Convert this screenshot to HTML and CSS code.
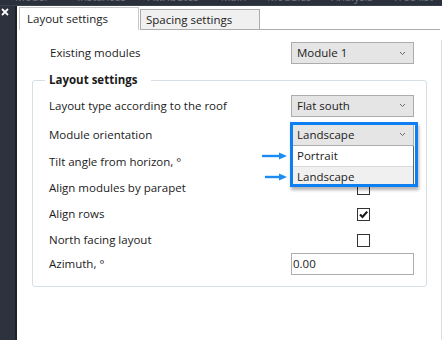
FILE: index.html
```html
<!DOCTYPE html>
<html>
<head>
<meta charset="utf-8">
<link rel="stylesheet" href="styles.css">
</head>
<body>
<div class="menubar">
  <span class="m1">Model</span><span class="m2">Instances</span><span class="m3">Attributes</span><span class="m4">Main</span><span class="m5">Modules</span><span class="m6">Analysis</span><span class="m7">Tree list</span>
</div>
<div class="workspace">
  <div class="side">
    <svg class="close" width="8" height="8" viewBox="0 0 8 8"><path d="M1 1L7 7M7 1L1 7" stroke="#ffffff" stroke-width="1.8" fill="none"/></svg>
  </div>
  <div class="panel">
    <div class="tabs">
      <div class="tab tab-active">Layout settings</div>
      <div class="tab tab-idle">Spacing settings</div>
      <div class="tab-fill"></div>
    </div>
    <div class="tabbody">
      <div class="content">
        <div class="top-row">
          <div class="label">Existing modules</div>
          <div class="select"><span>Module 1</span><svg class="chev" width="7" height="5" viewBox="0 0 7 5"><path d="M1 1L3.5 3.5L6 1" stroke="#6a6a6a" stroke-width="1" fill="none"/></svg></div>
        </div>
        <fieldset class="group">
          <legend class="group-title">Layout settings</legend>
          <div class="fields">
            <div class="label">Layout type according to the roof</div>
            <div class="select"><span>Flat south</span><svg class="chev" width="7" height="5" viewBox="0 0 7 5"><path d="M1 1L3.5 3.5L6 1" stroke="#6a6a6a" stroke-width="1" fill="none"/></svg></div>

            <div class="label">Module orientation</div>
            <div class="combo-open">
              <div class="select"><span>Landscape</span><svg class="chev" width="7" height="5" viewBox="0 0 7 5"><path d="M1 1L3.5 3.5L6 1" stroke="#6a6a6a" stroke-width="1" fill="none"/></svg></div>
              <div class="droplist">
                <div class="opt">Portrait<svg class="arrow arrow-1" width="26" height="8" viewBox="0 0 26 8"><path d="M0 4H18" stroke="#1c8cf4" stroke-width="2.4"/><path d="M17 0.5L25 4L17 7.5Z" fill="#1c8cf4"/></svg></div>
                <div class="opt opt-hover">Landscape<svg class="arrow arrow-2" width="23" height="8" viewBox="0 0 23 8"><path d="M0 4H15" stroke="#1c8cf4" stroke-width="2.4"/><path d="M14 0.5L22 4L14 7.5Z" fill="#1c8cf4"/></svg></div>
              </div>
              <div class="highlight"></div>
            </div>

            <div class="label">Tilt angle from horizon, °</div>
            <div class="input"></div>

            <div class="label">Align modules by parapet</div>
            <div class="check"></div>

            <div class="label">Align rows</div>
            <div class="check"><svg width="11" height="11" viewBox="0 0 11 11"><path d="M2 5.5L4.5 8L9.2 2.6" stroke="#1a1a1a" stroke-width="2.2" fill="none"/></svg></div>

            <div class="label">North facing layout</div>
            <div class="check"></div>

            <div class="label">Azimuth, °</div>
            <div class="input">0.00</div>
          </div>
        </fieldset>
      </div>
      <div class="edge"></div>
    </div>
  </div>
</div>
</body>
</html>
```
FILE: styles.css
```css
* { box-sizing: border-box; }
html, body { margin: 0; padding: 0; }
body {
  width: 442px;
  height: 340px;
  overflow: hidden;
  background: #ffffff;
  font-family: "Open Sans", "Noto Sans", sans-serif;
  font-size: 11.5px;
  line-height: 16px;
  color: #1b1b1b;
}
.menubar {
  height: 6px;
  background: #2b313c;
  border-bottom: 1px solid #3b424e;
  overflow: hidden;
  display: flex;
  white-space: nowrap;
}
.menubar span {
  color: #6f7783;
  font-size: 11px;
  line-height: 12px;
  margin-top: -9px;
  display: block;
}
.m1 { margin-left: 15px; }
.m2 { margin-left: 30px; }
.m3 { margin-left: 22px; }
.m4 { margin-left: 22px; }
.m5 { margin-left: 21px; }
.m6 { margin-left: 20px; }
.m7 { margin-left: 20px; }
.workspace {
  display: flex;
  height: 334px;
}
.side {
  width: 17px;
  flex: none;
  background: #2c323e;
  border-right: 2px solid #1d2129;
  padding: 2px 0 0 1px;
}
.close { display: block; }
.panel {
  flex: 1;
  display: flex;
  flex-direction: column;
}
.tabs {
  height: 24px;
  display: flex;
  align-items: flex-end;
  padding-left: 2px;
  padding-right: 2px;
}
.tab {
  width: 120px;
  border: 1px solid #acacac;
  white-space: nowrap;
}
.tab-active {
  height: 23px;
  border-color: #c9c9c9;
  border-bottom: none;
  padding: 3px 0 0 7px;
  background: #fff;
}
.tab-idle {
  height: 21px;
  margin-left: 1px;
  background: #f0f0f0;
  padding: 2px 0 0 5px;
}
.tab-fill {
  flex: 1;
  border-bottom: 1px solid #acacac;
}
.tabbody {
  flex: 1;
  display: flex;
}
.content {
  flex: 1;
  padding: 12px 14px 0 15px;
}
.edge {
  width: 1px;
  background: #d7dee4;
  margin-top: 10px;
}
.top-row {
  display: grid;
  grid-template-columns: 1fr 123px;
  align-items: center;
  height: 22px;
  padding: 0 13px 0 18px;
}
.group {
  margin: 8px 0 0;
  border: 1px solid #d5dfe5;
  border-radius: 3px;
  padding: 3px 12px 11px 16px;
  min-width: 0;
}
.group-title {
  font-weight: bold;
  margin-left: -4px;
  padding: 0 14px 0 4px;
  line-height: 16px;
}
.fields {
  display: grid;
  grid-template-columns: 1fr 123px;
  grid-template-rows: 29px 29px 26px 26px 26px 26px 22px;
  align-items: center;
}
.label { white-space: nowrap; }
.select {
  height: 22px;
  background: #e5e5e5;
  border: 1px solid #acacac;
  display: flex;
  align-items: center;
  justify-content: space-between;
  padding: 0 7px 0 5px;
}
.chev { display: block; }
.input {
  height: 22px;
  border: 1px solid #abadb3;
  background: #fff;
  padding: 2px 0 0 1px;
}
.check {
  width: 13px;
  height: 13px;
  margin-left: 66px;
  border: 1px solid #333333;
  background: #fff;
  display: flex;
  align-items: center;
  justify-content: center;
}
.check svg { display: block; }
.combo-open {
  position: relative;
  z-index: 2;
}
.droplist {
  position: absolute;
  left: 2px;
  right: 0;
  top: 22px;
  background: #fff;
  border-right: 1px solid #646464;
}
.opt {
  position: relative;
  height: 20px;
  padding: 2px 0 0 4px;
}
.opt-hover {
  background: #f0f0f0;
  border-top: 1px solid #dadada;
}
.arrow {
  position: absolute;
  top: 6px;
  display: block;
}
.arrow-1 { left: -31px; }
.arrow-2 { left: -28px; }
.highlight {
  position: absolute;
  left: -1px;
  top: -2px;
  width: 128px;
  height: 65px;
  border: 3px solid #0d7ff2;
  box-shadow: 1px 3px 3px rgba(0, 0, 0, 0.3);
}
```
